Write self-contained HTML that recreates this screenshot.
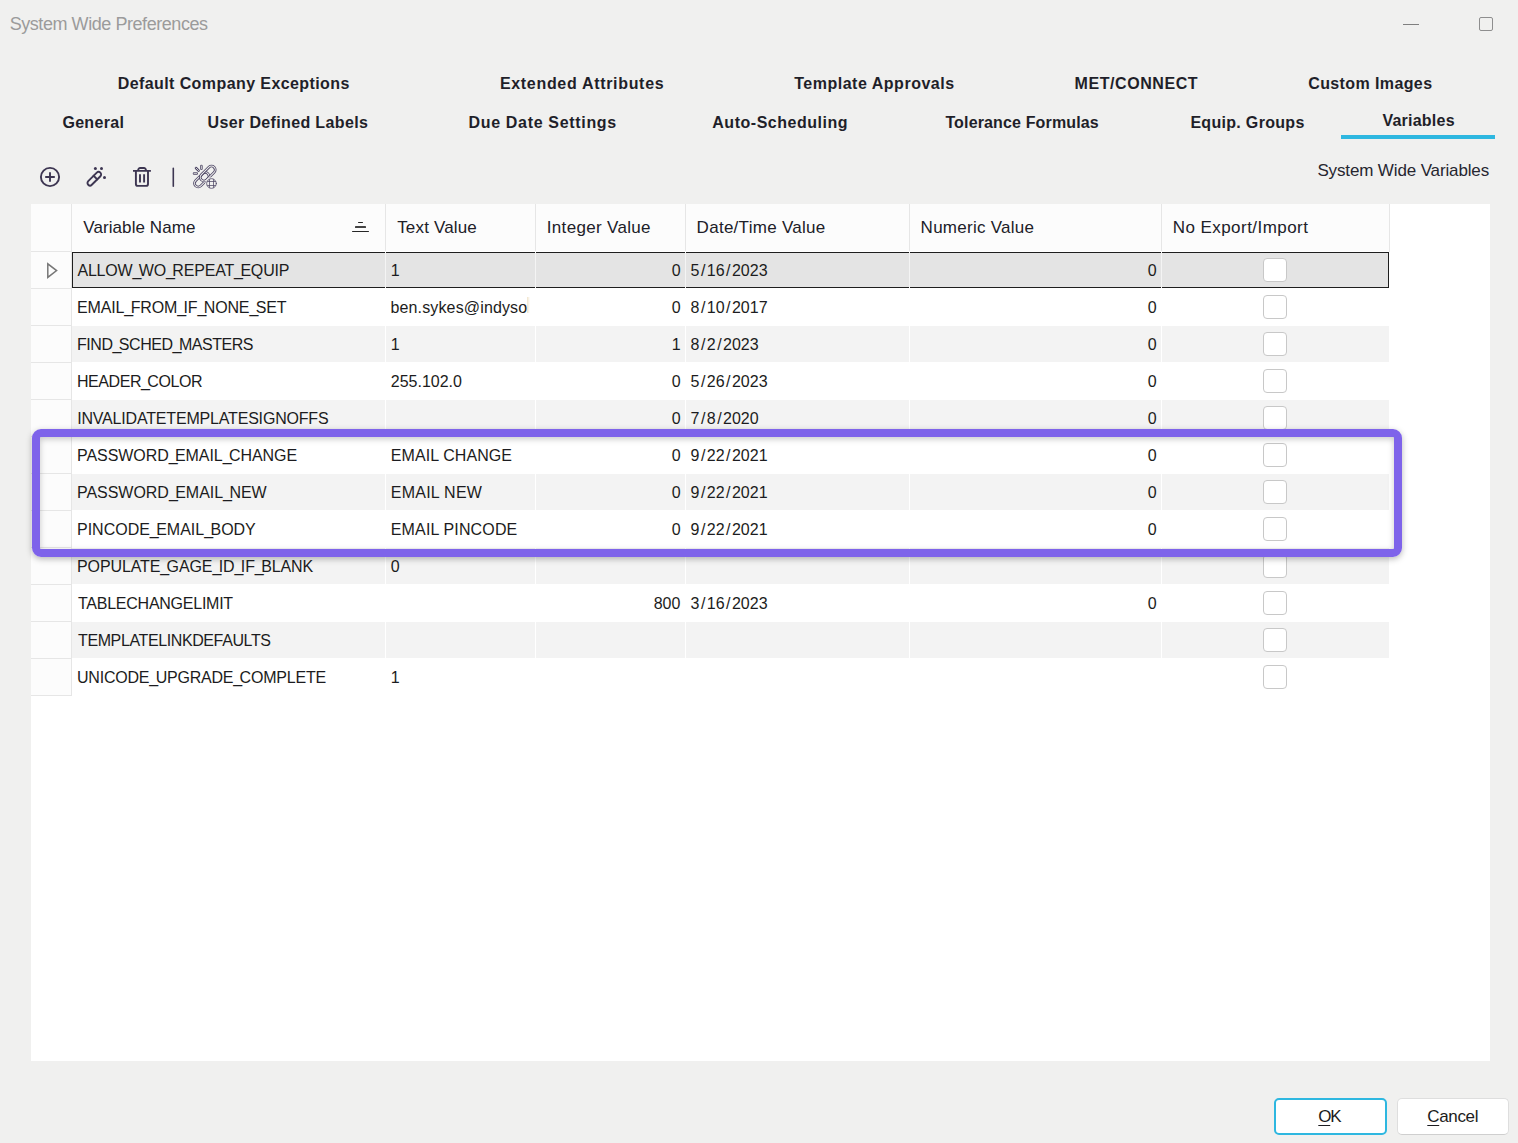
<!DOCTYPE html>
<html><head><meta charset="utf-8"><title>System Wide Preferences</title>
<style>
html,body{margin:0;padding:0}
body{width:1518px;height:1143px;overflow:hidden;position:relative;background:#f0f0ef;font-family:"Liberation Sans", sans-serif}
body div{position:absolute}
.t{white-space:nowrap}
.t span,.t u{position:static}
</style></head><body>
<div style="left:1403px;top:24px;width:16px;height:1px;background:#7f7f7f"></div>
<div style="left:1479px;top:17px;width:14px;height:14px;border:1px solid #8e8e8e;border-radius:2px;box-sizing:border-box"></div>
<div style="left:1341px;top:135px;width:154px;height:4px;background:#2eb7e0"></div>
<div style="left:31px;top:204px;width:1459px;height:857px;background:#ffffff"></div>
<div style="left:31px;top:204px;width:1358px;height:47px;background:#fcfcfc"></div>
<div style="left:31px;top:251px;width:41px;height:1px;background:#e6e6e6"></div>
<div style="left:71px;top:204px;width:1px;height:47px;background:#e6e6e6"></div>
<div style="left:385px;top:204px;width:1px;height:47px;background:#e6e6e6"></div>
<div style="left:535px;top:204px;width:1px;height:47px;background:#e6e6e6"></div>
<div style="left:685px;top:204px;width:1px;height:47px;background:#e6e6e6"></div>
<div style="left:909px;top:204px;width:1px;height:47px;background:#e6e6e6"></div>
<div style="left:1161px;top:204px;width:1px;height:47px;background:#e6e6e6"></div>
<div style="left:1389px;top:204px;width:1px;height:48px;background:#e6e6e6"></div>
<div style="left:31px;top:252px;width:40px;height:36px;background:#fcfcfc"></div>
<div style="left:31px;top:288px;width:40px;height:1px;background:#e6e6e6"></div>
<div style="left:71px;top:252px;width:1px;height:37px;background:#e6e6e6"></div>
<div style="left:72px;top:252px;width:1317px;height:36px;background:#e4e4e4"></div>
<div style="left:385px;top:252px;width:1px;height:37px;background:#ffffff"></div>
<div style="left:535px;top:252px;width:1px;height:37px;background:#ffffff"></div>
<div style="left:685px;top:252px;width:1px;height:37px;background:#ffffff"></div>
<div style="left:909px;top:252px;width:1px;height:37px;background:#ffffff"></div>
<div style="left:1161px;top:252px;width:1px;height:37px;background:#ffffff"></div>
<div style="left:31px;top:289px;width:40px;height:36px;background:#fcfcfc"></div>
<div style="left:31px;top:325px;width:40px;height:1px;background:#e6e6e6"></div>
<div style="left:71px;top:289px;width:1px;height:37px;background:#e6e6e6"></div>
<div style="left:385px;top:289px;width:1px;height:37px;background:#ffffff"></div>
<div style="left:535px;top:289px;width:1px;height:37px;background:#ffffff"></div>
<div style="left:685px;top:289px;width:1px;height:37px;background:#ffffff"></div>
<div style="left:909px;top:289px;width:1px;height:37px;background:#ffffff"></div>
<div style="left:1161px;top:289px;width:1px;height:37px;background:#ffffff"></div>
<div style="left:31px;top:326px;width:40px;height:36px;background:#fcfcfc"></div>
<div style="left:31px;top:362px;width:40px;height:1px;background:#e6e6e6"></div>
<div style="left:71px;top:326px;width:1px;height:37px;background:#e6e6e6"></div>
<div style="left:72px;top:326px;width:1317px;height:36px;background:#f3f3f3"></div>
<div style="left:385px;top:326px;width:1px;height:37px;background:#ffffff"></div>
<div style="left:535px;top:326px;width:1px;height:37px;background:#ffffff"></div>
<div style="left:685px;top:326px;width:1px;height:37px;background:#ffffff"></div>
<div style="left:909px;top:326px;width:1px;height:37px;background:#ffffff"></div>
<div style="left:1161px;top:326px;width:1px;height:37px;background:#ffffff"></div>
<div style="left:31px;top:363px;width:40px;height:36px;background:#fcfcfc"></div>
<div style="left:31px;top:399px;width:40px;height:1px;background:#e6e6e6"></div>
<div style="left:71px;top:363px;width:1px;height:37px;background:#e6e6e6"></div>
<div style="left:385px;top:363px;width:1px;height:37px;background:#ffffff"></div>
<div style="left:535px;top:363px;width:1px;height:37px;background:#ffffff"></div>
<div style="left:685px;top:363px;width:1px;height:37px;background:#ffffff"></div>
<div style="left:909px;top:363px;width:1px;height:37px;background:#ffffff"></div>
<div style="left:1161px;top:363px;width:1px;height:37px;background:#ffffff"></div>
<div style="left:31px;top:400px;width:40px;height:36px;background:#fcfcfc"></div>
<div style="left:31px;top:436px;width:40px;height:1px;background:#e6e6e6"></div>
<div style="left:71px;top:400px;width:1px;height:37px;background:#e6e6e6"></div>
<div style="left:72px;top:400px;width:1317px;height:36px;background:#f3f3f3"></div>
<div style="left:385px;top:400px;width:1px;height:37px;background:#ffffff"></div>
<div style="left:535px;top:400px;width:1px;height:37px;background:#ffffff"></div>
<div style="left:685px;top:400px;width:1px;height:37px;background:#ffffff"></div>
<div style="left:909px;top:400px;width:1px;height:37px;background:#ffffff"></div>
<div style="left:1161px;top:400px;width:1px;height:37px;background:#ffffff"></div>
<div style="left:31px;top:437px;width:40px;height:36px;background:#fcfcfc"></div>
<div style="left:31px;top:473px;width:40px;height:1px;background:#e6e6e6"></div>
<div style="left:71px;top:437px;width:1px;height:37px;background:#e6e6e6"></div>
<div style="left:385px;top:437px;width:1px;height:37px;background:#ffffff"></div>
<div style="left:535px;top:437px;width:1px;height:37px;background:#ffffff"></div>
<div style="left:685px;top:437px;width:1px;height:37px;background:#ffffff"></div>
<div style="left:909px;top:437px;width:1px;height:37px;background:#ffffff"></div>
<div style="left:1161px;top:437px;width:1px;height:37px;background:#ffffff"></div>
<div style="left:31px;top:474px;width:40px;height:36px;background:#fcfcfc"></div>
<div style="left:31px;top:510px;width:40px;height:1px;background:#e6e6e6"></div>
<div style="left:71px;top:474px;width:1px;height:37px;background:#e6e6e6"></div>
<div style="left:72px;top:474px;width:1317px;height:36px;background:#f3f3f3"></div>
<div style="left:385px;top:474px;width:1px;height:37px;background:#ffffff"></div>
<div style="left:535px;top:474px;width:1px;height:37px;background:#ffffff"></div>
<div style="left:685px;top:474px;width:1px;height:37px;background:#ffffff"></div>
<div style="left:909px;top:474px;width:1px;height:37px;background:#ffffff"></div>
<div style="left:1161px;top:474px;width:1px;height:37px;background:#ffffff"></div>
<div style="left:31px;top:511px;width:40px;height:36px;background:#fcfcfc"></div>
<div style="left:31px;top:547px;width:40px;height:1px;background:#e6e6e6"></div>
<div style="left:71px;top:511px;width:1px;height:37px;background:#e6e6e6"></div>
<div style="left:385px;top:511px;width:1px;height:37px;background:#ffffff"></div>
<div style="left:535px;top:511px;width:1px;height:37px;background:#ffffff"></div>
<div style="left:685px;top:511px;width:1px;height:37px;background:#ffffff"></div>
<div style="left:909px;top:511px;width:1px;height:37px;background:#ffffff"></div>
<div style="left:1161px;top:511px;width:1px;height:37px;background:#ffffff"></div>
<div style="left:31px;top:548px;width:40px;height:36px;background:#fcfcfc"></div>
<div style="left:31px;top:584px;width:40px;height:1px;background:#e6e6e6"></div>
<div style="left:71px;top:548px;width:1px;height:37px;background:#e6e6e6"></div>
<div style="left:72px;top:548px;width:1317px;height:36px;background:#f3f3f3"></div>
<div style="left:385px;top:548px;width:1px;height:37px;background:#ffffff"></div>
<div style="left:535px;top:548px;width:1px;height:37px;background:#ffffff"></div>
<div style="left:685px;top:548px;width:1px;height:37px;background:#ffffff"></div>
<div style="left:909px;top:548px;width:1px;height:37px;background:#ffffff"></div>
<div style="left:1161px;top:548px;width:1px;height:37px;background:#ffffff"></div>
<div style="left:31px;top:585px;width:40px;height:36px;background:#fcfcfc"></div>
<div style="left:31px;top:621px;width:40px;height:1px;background:#e6e6e6"></div>
<div style="left:71px;top:585px;width:1px;height:37px;background:#e6e6e6"></div>
<div style="left:385px;top:585px;width:1px;height:37px;background:#ffffff"></div>
<div style="left:535px;top:585px;width:1px;height:37px;background:#ffffff"></div>
<div style="left:685px;top:585px;width:1px;height:37px;background:#ffffff"></div>
<div style="left:909px;top:585px;width:1px;height:37px;background:#ffffff"></div>
<div style="left:1161px;top:585px;width:1px;height:37px;background:#ffffff"></div>
<div style="left:31px;top:622px;width:40px;height:36px;background:#fcfcfc"></div>
<div style="left:31px;top:658px;width:40px;height:1px;background:#e6e6e6"></div>
<div style="left:71px;top:622px;width:1px;height:37px;background:#e6e6e6"></div>
<div style="left:72px;top:622px;width:1317px;height:36px;background:#f3f3f3"></div>
<div style="left:385px;top:622px;width:1px;height:37px;background:#ffffff"></div>
<div style="left:535px;top:622px;width:1px;height:37px;background:#ffffff"></div>
<div style="left:685px;top:622px;width:1px;height:37px;background:#ffffff"></div>
<div style="left:909px;top:622px;width:1px;height:37px;background:#ffffff"></div>
<div style="left:1161px;top:622px;width:1px;height:37px;background:#ffffff"></div>
<div style="left:31px;top:659px;width:40px;height:36px;background:#fcfcfc"></div>
<div style="left:31px;top:695px;width:40px;height:1px;background:#e6e6e6"></div>
<div style="left:71px;top:659px;width:1px;height:37px;background:#e6e6e6"></div>
<div style="left:385px;top:659px;width:1px;height:37px;background:#ffffff"></div>
<div style="left:535px;top:659px;width:1px;height:37px;background:#ffffff"></div>
<div style="left:685px;top:659px;width:1px;height:37px;background:#ffffff"></div>
<div style="left:909px;top:659px;width:1px;height:37px;background:#ffffff"></div>
<div style="left:1161px;top:659px;width:1px;height:37px;background:#ffffff"></div>
<div style="left:1274px;top:1098px;width:113px;height:37px;background:#fff;border:2px solid #2eb7e0;border-radius:5px;box-sizing:border-box"></div>
<div style="left:1397px;top:1098px;width:112px;height:37px;background:#ffffff;border:1px solid #dedede;border-bottom-color:#cfcfcf;border-radius:5px;box-sizing:border-box"></div>
<div style="left:358px;top:221.8px;width:5px;height:1.3px;background:#262626;border-radius:.6px"></div>
<div style="left:355px;top:226.2px;width:11px;height:1.6px;background:#444444;border-radius:.6px"></div>
<div style="left:352px;top:230.8px;width:17px;height:1.4px;background:#262626;border-radius:.6px"></div>
<div style="left:1263px;top:258px;width:24px;height:24px;background:#fff;border:1px solid #c8c8c8;border-radius:4px;box-sizing:border-box"></div>
<div style="left:527px;top:297px;width:3px;height:16px;background:linear-gradient(90deg,rgba(225,200,150,.5),rgba(255,255,255,0))"></div>
<div style="left:1263px;top:295px;width:24px;height:24px;background:#fff;border:1px solid #c8c8c8;border-radius:4px;box-sizing:border-box"></div>
<div style="left:1263px;top:332px;width:24px;height:24px;background:#fff;border:1px solid #c8c8c8;border-radius:4px;box-sizing:border-box"></div>
<div style="left:1263px;top:369px;width:24px;height:24px;background:#fff;border:1px solid #c8c8c8;border-radius:4px;box-sizing:border-box"></div>
<div style="left:1263px;top:406px;width:24px;height:24px;background:#fff;border:1px solid #c8c8c8;border-radius:4px;box-sizing:border-box"></div>
<div style="left:1263px;top:443px;width:24px;height:24px;background:#fff;border:1px solid #c8c8c8;border-radius:4px;box-sizing:border-box"></div>
<div style="left:1263px;top:480px;width:24px;height:24px;background:#fff;border:1px solid #c8c8c8;border-radius:4px;box-sizing:border-box"></div>
<div style="left:1263px;top:517px;width:24px;height:24px;background:#fff;border:1px solid #c8c8c8;border-radius:4px;box-sizing:border-box"></div>
<div style="left:1263px;top:554px;width:24px;height:24px;background:#fff;border:1px solid #c8c8c8;border-radius:4px;box-sizing:border-box"></div>
<div style="left:1263px;top:591px;width:24px;height:24px;background:#fff;border:1px solid #c8c8c8;border-radius:4px;box-sizing:border-box"></div>
<div style="left:1263px;top:628px;width:24px;height:24px;background:#fff;border:1px solid #c8c8c8;border-radius:4px;box-sizing:border-box"></div>
<div style="left:1263px;top:665px;width:24px;height:24px;background:#fff;border:1px solid #c8c8c8;border-radius:4px;box-sizing:border-box"></div>
<div style="left:72px;top:252px;width:1317px;height:36px;border:1px solid #1e1e1e;box-sizing:border-box"></div>
<div style="left:385px;top:252px;width:1px;height:36px;background:#f4f4f4"></div>
<div style="left:535px;top:252px;width:1px;height:36px;background:#f4f4f4"></div>
<div style="left:685px;top:252px;width:1px;height:36px;background:#f4f4f4"></div>
<div style="left:909px;top:252px;width:1px;height:36px;background:#f4f4f4"></div>
<div style="left:1161px;top:252px;width:1px;height:36px;background:#f4f4f4"></div>
<svg style="position:absolute;left:0;top:0" width="80" height="300"><path d="M47.8 263.8v13.6l8.8-6.8z" fill="none" stroke="#777777" stroke-width="1.5" stroke-linejoin="miter"/></svg>
<div class="t" style="left:9.70px;top:14.76px;font-size:18px;line-height:18px;font-weight:400;color:#9b9b9b;letter-spacing:-0.441px;">System Wide Preferences</div>
<div class="t" style="left:117.70px;top:76.46px;font-size:16px;line-height:16px;font-weight:700;color:#1f1f29;letter-spacing:0.412px;">Default Company Exceptions</div>
<div class="t" style="left:499.90px;top:76.46px;font-size:16px;line-height:16px;font-weight:700;color:#1f1f29;letter-spacing:0.683px;">Extended Attributes</div>
<div class="t" style="left:794.20px;top:76.46px;font-size:16px;line-height:16px;font-weight:700;color:#1f1f29;letter-spacing:0.518px;">Template Approvals</div>
<div class="t" style="left:1074.60px;top:76.46px;font-size:16px;line-height:16px;font-weight:700;color:#1f1f29;letter-spacing:0.56px;">MET/CONNECT</div>
<div class="t" style="left:1308.20px;top:76.46px;font-size:16px;line-height:16px;font-weight:700;color:#1f1f29;letter-spacing:0.392px;">Custom Images</div>
<div class="t" style="left:62.40px;top:115.46px;font-size:16px;line-height:16px;font-weight:700;color:#1f1f29;letter-spacing:0.317px;">General</div>
<div class="t" style="left:207.60px;top:115.46px;font-size:16px;line-height:16px;font-weight:700;color:#1f1f29;letter-spacing:0.356px;">User Defined Labels</div>
<div class="t" style="left:468.50px;top:115.46px;font-size:16px;line-height:16px;font-weight:700;color:#1f1f29;letter-spacing:0.675px;">Due Date Settings</div>
<div class="t" style="left:712.30px;top:115.46px;font-size:16px;line-height:16px;font-weight:700;color:#1f1f29;letter-spacing:0.521px;">Auto-Scheduling</div>
<div class="t" style="left:945.40px;top:115.46px;font-size:16px;line-height:16px;font-weight:700;color:#1f1f29;letter-spacing:0.147px;">Tolerance Formulas</div>
<div class="t" style="left:1190.40px;top:115.46px;font-size:16px;line-height:16px;font-weight:700;color:#1f1f29;letter-spacing:0.308px;">Equip. Groups</div>
<div class="t" style="left:1382.40px;top:112.66px;font-size:16px;line-height:16px;font-weight:700;color:#1f1f29;letter-spacing:0.237px;">Variables</div>
<div class="t" style="left:1317.40px;top:161.61px;font-size:17px;line-height:17px;font-weight:400;color:#262630;letter-spacing:-0.135px;">System Wide Variables</div>
<div class="t" style="left:83.30px;top:218.71px;font-size:17px;line-height:17px;font-weight:400;color:#202028;letter-spacing:0.075px;">Variable Name</div>
<div class="t" style="left:397.20px;top:218.71px;font-size:17px;line-height:17px;font-weight:400;color:#202028;letter-spacing:0.167px;">Text Value</div>
<div class="t" style="left:546.80px;top:218.71px;font-size:17px;line-height:17px;font-weight:400;color:#202028;letter-spacing:0.317px;">Integer Value</div>
<div class="t" style="left:696.60px;top:218.71px;font-size:17px;line-height:17px;font-weight:400;color:#202028;letter-spacing:0.279px;">Date/Time Value</div>
<div class="t" style="left:920.60px;top:218.71px;font-size:17px;line-height:17px;font-weight:400;color:#202028;letter-spacing:0.258px;">Numeric Value</div>
<div class="t" style="left:1172.70px;top:218.71px;font-size:17px;line-height:17px;font-weight:400;color:#202028;letter-spacing:0.447px;">No Export/Import</div>
<div class="t" style="left:77.40px;top:263.46px;font-size:16px;line-height:16px;font-weight:400;color:#1c1c20;letter-spacing:-0.182px;">ALLOW<span style="letter-spacing:-2.6px">_</span>WO<span style="letter-spacing:-2.6px">_</span>REPEAT<span style="letter-spacing:-2.6px">_</span>EQUIP</div>
<div class="t" style="left:390.80px;top:263.46px;font-size:16px;line-height:16px;font-weight:400;color:#1c1c20;">1</div>
<div class="t" style="left:671.70px;top:263.46px;font-size:16px;line-height:16px;font-weight:400;color:#1c1c20;">0</div>
<div class="t" style="left:690.60px;top:263.46px;font-size:16px;line-height:16px;font-weight:400;color:#1c1c20;">5<span style="margin:0 1.45px">/</span>16<span style="margin:0 1.45px">/</span>2023</div>
<div class="t" style="left:1147.70px;top:263.46px;font-size:16px;line-height:16px;font-weight:400;color:#1c1c20;">0</div>
<div class="t" style="left:77.00px;top:300.46px;font-size:16px;line-height:16px;font-weight:400;color:#1c1c20;letter-spacing:-0.141px;">EMAIL<span style="letter-spacing:-2.6px">_</span>FROM<span style="letter-spacing:-2.6px">_</span>IF<span style="letter-spacing:-2.6px">_</span>NONE<span style="letter-spacing:-2.6px">_</span>SET</div>
<div class="t" style="left:390.50px;top:300.46px;font-size:16px;line-height:16px;font-weight:400;color:#1c1c20;letter-spacing:0.14px;">ben.sykes@indyso</div>
<div class="t" style="left:671.70px;top:300.46px;font-size:16px;line-height:16px;font-weight:400;color:#1c1c20;">0</div>
<div class="t" style="left:690.60px;top:300.46px;font-size:16px;line-height:16px;font-weight:400;color:#1c1c20;">8<span style="margin:0 1.45px">/</span>10<span style="margin:0 1.45px">/</span>2017</div>
<div class="t" style="left:1147.70px;top:300.46px;font-size:16px;line-height:16px;font-weight:400;color:#1c1c20;">0</div>
<div class="t" style="left:77.00px;top:337.46px;font-size:16px;line-height:16px;font-weight:400;color:#1c1c20;letter-spacing:-0.453px;">FIND<span style="letter-spacing:-2.6px">_</span>SCHED<span style="letter-spacing:-2.6px">_</span>MASTERS</div>
<div class="t" style="left:390.80px;top:337.46px;font-size:16px;line-height:16px;font-weight:400;color:#1c1c20;">1</div>
<div class="t" style="left:671.70px;top:337.46px;font-size:16px;line-height:16px;font-weight:400;color:#1c1c20;">1</div>
<div class="t" style="left:690.60px;top:337.46px;font-size:16px;line-height:16px;font-weight:400;color:#1c1c20;">8<span style="margin:0 1.45px">/</span>2<span style="margin:0 1.45px">/</span>2023</div>
<div class="t" style="left:1147.70px;top:337.46px;font-size:16px;line-height:16px;font-weight:400;color:#1c1c20;">0</div>
<div class="t" style="left:77.00px;top:374.46px;font-size:16px;line-height:16px;font-weight:400;color:#1c1c20;letter-spacing:-0.44px;">HEADER<span style="letter-spacing:-2.6px">_</span>COLOR</div>
<div class="t" style="left:390.80px;top:374.46px;font-size:16px;line-height:16px;font-weight:400;color:#1c1c20;letter-spacing:-0.013px;">255.102.0</div>
<div class="t" style="left:671.70px;top:374.46px;font-size:16px;line-height:16px;font-weight:400;color:#1c1c20;">0</div>
<div class="t" style="left:690.60px;top:374.46px;font-size:16px;line-height:16px;font-weight:400;color:#1c1c20;">5<span style="margin:0 1.45px">/</span>26<span style="margin:0 1.45px">/</span>2023</div>
<div class="t" style="left:1147.70px;top:374.46px;font-size:16px;line-height:16px;font-weight:400;color:#1c1c20;">0</div>
<div class="t" style="left:77.20px;top:411.46px;font-size:16px;line-height:16px;font-weight:400;color:#1c1c20;letter-spacing:-0.184px;">INVALIDATETEMPLATESIGNOFFS</div>
<div class="t" style="left:671.70px;top:411.46px;font-size:16px;line-height:16px;font-weight:400;color:#1c1c20;">0</div>
<div class="t" style="left:690.60px;top:411.46px;font-size:16px;line-height:16px;font-weight:400;color:#1c1c20;">7<span style="margin:0 1.45px">/</span>8<span style="margin:0 1.45px">/</span>2020</div>
<div class="t" style="left:1147.70px;top:411.46px;font-size:16px;line-height:16px;font-weight:400;color:#1c1c20;">0</div>
<div class="t" style="left:77.00px;top:448.46px;font-size:16px;line-height:16px;font-weight:400;color:#1c1c20;letter-spacing:-0.067px;">PASSWORD<span style="letter-spacing:-2.6px">_</span>EMAIL<span style="letter-spacing:-2.6px">_</span>CHANGE</div>
<div class="t" style="left:390.80px;top:448.46px;font-size:16px;line-height:16px;font-weight:400;color:#1c1c20;letter-spacing:0.082px;">EMAIL CHANGE</div>
<div class="t" style="left:671.70px;top:448.46px;font-size:16px;line-height:16px;font-weight:400;color:#1c1c20;">0</div>
<div class="t" style="left:690.60px;top:448.46px;font-size:16px;line-height:16px;font-weight:400;color:#1c1c20;">9<span style="margin:0 1.45px">/</span>22<span style="margin:0 1.45px">/</span>2021</div>
<div class="t" style="left:1147.70px;top:448.46px;font-size:16px;line-height:16px;font-weight:400;color:#1c1c20;">0</div>
<div class="t" style="left:77.00px;top:485.46px;font-size:16px;line-height:16px;font-weight:400;color:#1c1c20;letter-spacing:-0.033px;">PASSWORD<span style="letter-spacing:-2.6px">_</span>EMAIL<span style="letter-spacing:-2.6px">_</span>NEW</div>
<div class="t" style="left:390.80px;top:485.46px;font-size:16px;line-height:16px;font-weight:400;color:#1c1c20;letter-spacing:0.237px;">EMAIL NEW</div>
<div class="t" style="left:671.70px;top:485.46px;font-size:16px;line-height:16px;font-weight:400;color:#1c1c20;">0</div>
<div class="t" style="left:690.60px;top:485.46px;font-size:16px;line-height:16px;font-weight:400;color:#1c1c20;">9<span style="margin:0 1.45px">/</span>22<span style="margin:0 1.45px">/</span>2021</div>
<div class="t" style="left:1147.70px;top:485.46px;font-size:16px;line-height:16px;font-weight:400;color:#1c1c20;">0</div>
<div class="t" style="left:77.00px;top:522.46px;font-size:16px;line-height:16px;font-weight:400;color:#1c1c20;letter-spacing:-0.007px;">PINCODE<span style="letter-spacing:-2.6px">_</span>EMAIL<span style="letter-spacing:-2.6px">_</span>BODY</div>
<div class="t" style="left:390.80px;top:522.46px;font-size:16px;line-height:16px;font-weight:400;color:#1c1c20;letter-spacing:0.142px;">EMAIL PINCODE</div>
<div class="t" style="left:671.70px;top:522.46px;font-size:16px;line-height:16px;font-weight:400;color:#1c1c20;">0</div>
<div class="t" style="left:690.60px;top:522.46px;font-size:16px;line-height:16px;font-weight:400;color:#1c1c20;">9<span style="margin:0 1.45px">/</span>22<span style="margin:0 1.45px">/</span>2021</div>
<div class="t" style="left:1147.70px;top:522.46px;font-size:16px;line-height:16px;font-weight:400;color:#1c1c20;">0</div>
<div class="t" style="left:77.00px;top:559.46px;font-size:16px;line-height:16px;font-weight:400;color:#1c1c20;letter-spacing:-0.11px;">POPULATE<span style="letter-spacing:-2.6px">_</span>GAGE<span style="letter-spacing:-2.6px">_</span>ID<span style="letter-spacing:-2.6px">_</span>IF<span style="letter-spacing:-2.6px">_</span>BLANK</div>
<div class="t" style="left:390.80px;top:559.46px;font-size:16px;line-height:16px;font-weight:400;color:#1c1c20;">0</div>
<div class="t" style="left:78.00px;top:596.46px;font-size:16px;line-height:16px;font-weight:400;color:#1c1c20;letter-spacing:-0.247px;">TABLECHANGELIMIT</div>
<div class="t" style="left:653.70px;top:596.46px;font-size:16px;line-height:16px;font-weight:400;color:#1c1c20;">800</div>
<div class="t" style="left:690.60px;top:596.46px;font-size:16px;line-height:16px;font-weight:400;color:#1c1c20;">3<span style="margin:0 1.45px">/</span>16<span style="margin:0 1.45px">/</span>2023</div>
<div class="t" style="left:1147.70px;top:596.46px;font-size:16px;line-height:16px;font-weight:400;color:#1c1c20;">0</div>
<div class="t" style="left:78.00px;top:633.46px;font-size:16px;line-height:16px;font-weight:400;color:#1c1c20;letter-spacing:-0.389px;">TEMPLATELINKDEFAULTS</div>
<div class="t" style="left:77.00px;top:670.46px;font-size:16px;line-height:16px;font-weight:400;color:#1c1c20;letter-spacing:-0.21px;">UNICODE<span style="letter-spacing:-2.6px">_</span>UPGRADE<span style="letter-spacing:-2.6px">_</span>COMPLETE</div>
<div class="t" style="left:390.80px;top:670.46px;font-size:16px;line-height:16px;font-weight:400;color:#1c1c20;">1</div>
<div class="t" style="left:1318.30px;top:1107.71px;font-size:17px;line-height:17px;font-weight:400;color:#1c1c20;letter-spacing:-1.3px;"><u style="text-decoration-thickness:1px;text-underline-offset:3px">O</u>K</div>
<div class="t" style="left:1427.30px;top:1107.71px;font-size:17px;line-height:17px;font-weight:400;color:#1c1c20;letter-spacing:-0.36px;"><u style="text-decoration-thickness:1px;text-underline-offset:3px">C</u>ancel</div>
<svg style="position:absolute;left:0;top:0" width="1518" height="200" viewBox="0 0 1518 200">
<g fill="none" stroke="#3d3652" stroke-width="1.9" stroke-linecap="round" stroke-linejoin="round">
<circle cx="50" cy="177" r="9.1"/>
<path d="M50 172.2v9.6M45.2 177h9.6" stroke-linecap="butt"/>
<g transform="translate(94.3 178.7) rotate(-45)"><rect x="-8.6" y="-2.55" width="17.2" height="5.1" rx="2.55"/><path d="M1.6 -2.55v5.1"/></g>
<path d="M133 170.9h17.9M138.2 170.6v-0.7a1.9 1.9 0 0 1 1.9 -1.9h3.9a1.9 1.9 0 0 1 1.9 1.9v0.7" stroke-linecap="butt"/>
<path d="M135.9 171v12.9a2 2 0 0 0 2 2h8.1a2 2 0 0 0 2 -2v-12.9M140 174.3v8.3M144.1 174.3v8.3" stroke-linecap="butt"/>
<path d="M173.3 168.4v17.8" stroke-width="1.6"/>
</g>
<g fill="#3d3652"><circle cx="95.4" cy="168.4" r="1.5"/><circle cx="101.5" cy="168.4" r="1.5"/><circle cx="104.5" cy="177.5" r="1.5"/></g>
<g transform="translate(188 160)">
<g fill="none" stroke-linecap="round">
<g transform="translate(13.75 19.75) rotate(-45)"><rect x="-8.72" y="-3.7" width="17.44" height="7.4" rx="3.7" stroke="#4f4866" stroke-width="2.7"/><rect x="-8.72" y="-3.7" width="17.44" height="7.4" rx="3.7" stroke="#f0f0ef" stroke-width="1.0"/></g>
<g transform="translate(19.75 13.55) rotate(-45)"><rect x="-9" y="-3.7" width="18" height="7.4" rx="3.7" stroke="#4f4866" stroke-width="2.7"/><rect x="-9" y="-3.7" width="18" height="7.4" rx="3.7" stroke="#f0f0ef" stroke-width="1.0"/></g>
<circle cx="23.5" cy="23.5" r="6.2" fill="#f0f0ef"/>
<circle cx="23.5" cy="23.5" r="4.85" stroke="#4f4866" stroke-width="0.8"/>
<clipPath id="gc"><circle cx="23.5" cy="23.5" r="4.8"/></clipPath>
<path clip-path="url(#gc)" d="M21.5 18.6v9.8M25.5 18.6v9.8M18.6 21.5h9.8M18.6 25.5h9.8" stroke="#4f4866" stroke-width="0.75"/>
<path d="M6 13.4h2.8M13.4 6v2.8M8 8l2.6 2.6" stroke="#4f4866" stroke-width="2.5"/>
<path d="M6 13.4h2.8M13.4 6v2.8M8 8l2.6 2.6" stroke="#f0f0ef" stroke-width="0.8"/>
</g></g>
</svg>
<div style="left:32px;top:429px;width:1370px;height:128px;box-sizing:border-box;border:8px solid #7e63ea;border-radius:9px;box-shadow:0 2px 6px rgba(0,0,0,.28), inset 0 2px 6px rgba(0,0,0,.22)"></div>
</body></html>
